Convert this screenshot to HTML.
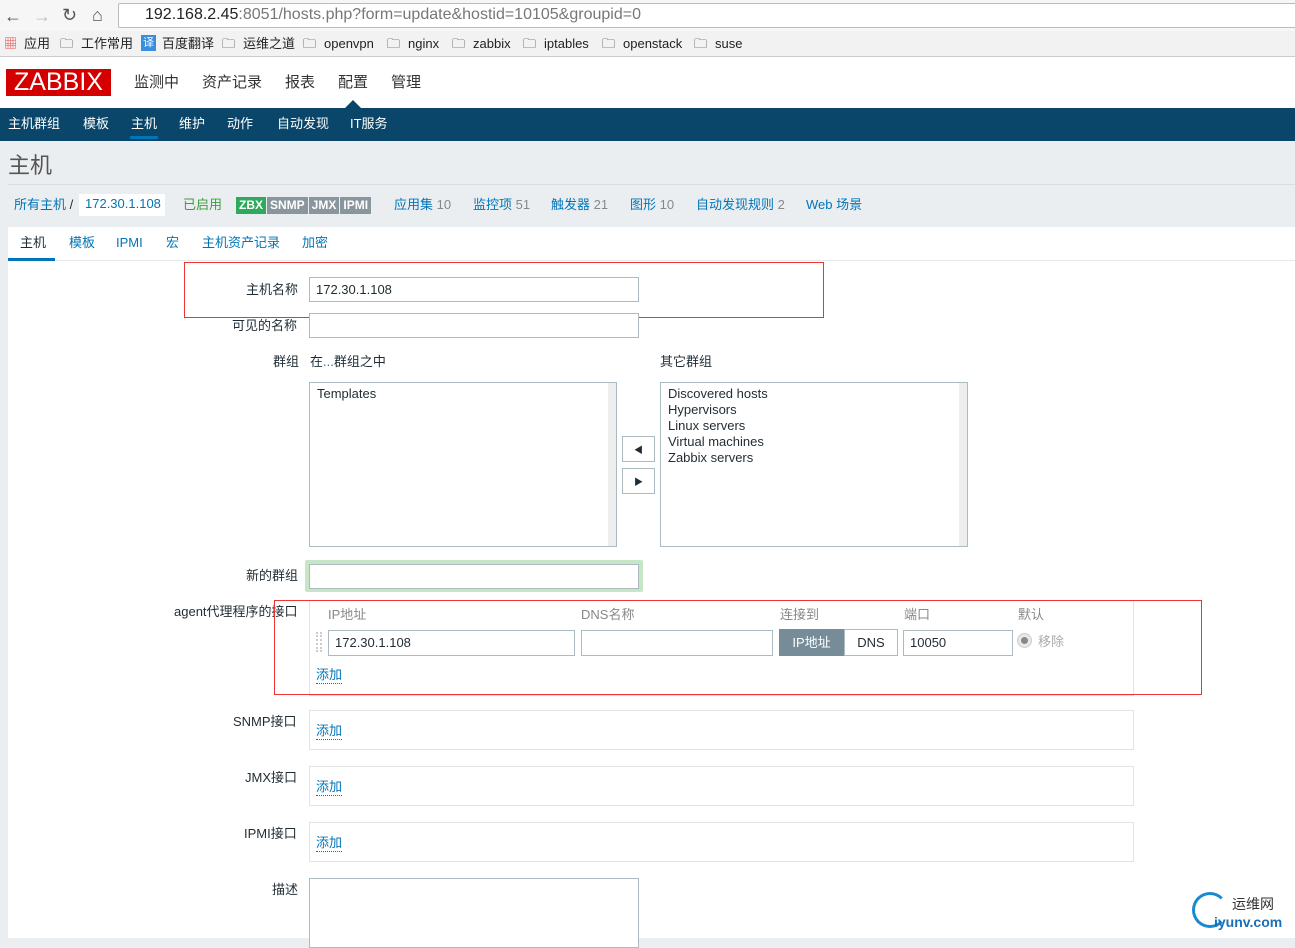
<!DOCTYPE html><html><head><meta charset="utf-8"><style>
*{box-sizing:border-box;margin:0;padding:0}
body{width:1295px;height:938px;overflow:hidden;font-family:"Liberation Sans","Noto Sans CJK SC",sans-serif;font-size:12px;color:#1f2c33;background:#ebeef0;position:relative}
.a{position:absolute;white-space:nowrap;line-height:1.3}
.blue{color:#0275b8}
.in{position:absolute;background:#fff;border:1px solid #acbbc2;height:25px;padding:4px 6px;font-size:12px;line-height:15px}
.box{position:absolute;background:#fff;border:1px solid #dfe4e7}
.add{color:#0275b8;border-bottom:1px dotted #0275b8;font-size:13px;line-height:1.2}
.bm{position:absolute;top:36px;font-size:13px;color:#222;line-height:1.3}
.g{color:#888}
</style></head><body>
<!-- chrome -->
<div class="a" style="left:0;top:0;width:1295px;height:31px;background:#f6f6f6"></div>
<div class="a" style="left:4px;top:5px;font-size:18px;color:#555">←</div>
<div class="a" style="left:33px;top:5px;font-size:18px;color:#bbb">→</div>
<div class="a" style="left:62px;top:4px;font-size:18px;color:#555">↻</div>
<div class="a" style="left:92px;top:4px;font-size:18px;color:#555">⌂</div>
<div class="a" style="left:118px;top:3px;width:1180px;height:25px;background:#fff;border:1px solid #bbb;border-radius:2px"></div>
<div class="a" style="left:145px;top:5px;font-size:16px;color:#222">192.168.2.45<span style="color:#777">:8051/hosts.php?form=update&amp;hostid=10105&amp;groupid=0</span></div>
<div class="a" style="left:0;top:31px;width:1295px;height:26px;background:#f2f2f2;border-bottom:1px solid #ccc"></div>
<div class="bm" style="left:4px;color:#e44">▦</div><div class="bm" style="left:24px">应用</div>
<div class="bm" style="left:60px">🗀</div><div class="bm" style="left:81px">工作常用</div>
<div class="bm" style="left:141px;top:35px;background:#3b8de0;color:#fff;font-size:11px;padding:1px 2px">译</div><div class="bm" style="left:162px">百度翻译</div>
<div class="bm" style="left:222px">🗀</div><div class="bm" style="left:243px">运维之道</div>
<div class="bm" style="left:303px">🗀</div><div class="bm" style="left:324px">openvpn</div>
<div class="bm" style="left:387px">🗀</div><div class="bm" style="left:408px">nginx</div>
<div class="bm" style="left:452px">🗀</div><div class="bm" style="left:473px">zabbix</div>
<div class="bm" style="left:523px">🗀</div><div class="bm" style="left:544px">iptables</div>
<div class="bm" style="left:602px">🗀</div><div class="bm" style="left:623px">openstack</div>
<div class="bm" style="left:694px">🗀</div><div class="bm" style="left:715px">suse</div>
<!-- header -->
<div class="a" style="left:0;top:57px;width:1295px;height:51px;background:#fff"></div>
<div class="a" style="left:6px;top:69px;width:105px;height:27px;background:#d40000;color:#fff;font-size:25px;line-height:27px;text-align:center">ZABBIX</div>
<div class="a" style="left:134px;top:73px;font-size:15px;color:#333">监测中</div>
<div class="a" style="left:202px;top:73px;font-size:15px;color:#333">资产记录</div>
<div class="a" style="left:285px;top:73px;font-size:15px;color:#333">报表</div>
<div class="a" style="left:338px;top:73px;font-size:15px;color:#333">配置</div>
<div class="a" style="left:391px;top:73px;font-size:15px;color:#333">管理</div>
<div class="a" style="left:345px;top:100px;width:0;height:0;border:8px solid transparent;border-bottom-color:#0a466a;border-top:0"></div>
<div class="a" style="left:0;top:108px;width:1295px;height:33px;background:#0a466a"></div>
<div class="a" style="left:8px;top:116px;font-size:13px;color:#fff">主机群组</div>
<div class="a" style="left:83px;top:116px;font-size:13px;color:#fff">模板</div>
<div class="a" style="left:131px;top:116px;font-size:13px;color:#fff">主机</div>
<div class="a" style="left:179px;top:116px;font-size:13px;color:#fff">维护</div>
<div class="a" style="left:227px;top:116px;font-size:13px;color:#fff">动作</div>
<div class="a" style="left:277px;top:116px;font-size:13px;color:#fff">自动发现</div>
<div class="a" style="left:350px;top:116px;font-size:13px;color:#fff">IT服务</div>
<div class="a" style="left:130px;top:136px;width:28px;height:3px;background:#0275b8"></div>
<div class="a" style="left:8px;top:152px;font-size:22px;color:#555">主机</div>
<div class="a" style="left:8px;top:184px;width:1287px;height:1px;background:#d9dee1"></div>
<div class="a" style="left:14px;top:197px;font-size:13px"><span class="blue">所有主机</span> /</div>
<div class="a" style="left:79px;top:194px;width:86px;height:22px;background:#fff;font-size:13px;padding:2px 6px"><span class="blue">172.30.1.108</span></div>
<div class="a" style="left:183px;top:197px;font-size:13px;color:#3b9f3b">已启用</div>
<div class="a" style="left:236px;top:197px;height:17px;font-size:12px;font-weight:bold;color:#fff;line-height:17px"><span style="background:#2eaa5c;padding:0 3px;display:inline-block">ZBX</span><span style="background:#8a969d;padding:0 3px;display:inline-block;margin-left:1px">SNMP</span><span style="background:#8a969d;padding:0 3px;display:inline-block;margin-left:1px">JMX</span><span style="background:#8a969d;padding:0 3px;display:inline-block;margin-left:1px">IPMI</span></div>
<div class="a blue" style="left:394px;top:197px;font-size:13px">应用集 <span class="g">10</span></div>
<div class="a blue" style="left:473px;top:197px;font-size:13px">监控项 <span class="g">51</span></div>
<div class="a blue" style="left:551px;top:197px;font-size:13px">触发器 <span class="g">21</span></div>
<div class="a blue" style="left:630px;top:197px;font-size:13px">图形 <span class="g">10</span></div>
<div class="a blue" style="left:696px;top:197px;font-size:13px">自动发现规则 <span class="g">2</span></div>
<div class="a blue" style="left:806px;top:197px;font-size:13px">Web 场景</div>
<!-- form -->
<div class="a" style="left:8px;top:227px;width:1287px;height:711px;background:#fff"></div>
<div class="a" style="left:20px;top:235px;font-size:13px">主机</div>
<div class="a blue" style="left:69px;top:235px;font-size:13px">模板</div>
<div class="a blue" style="left:116px;top:235px;font-size:13px">IPMI</div>
<div class="a blue" style="left:166px;top:235px;font-size:13px">宏</div>
<div class="a blue" style="left:202px;top:235px;font-size:13px">主机资产记录</div>
<div class="a blue" style="left:302px;top:235px;font-size:13px">加密</div>
<div class="a" style="left:8px;top:258px;width:47px;height:3px;background:#0275b8"></div>
<div class="a" style="left:55px;top:260px;width:1240px;height:1px;background:#e5e8ea"></div>
<div class="a" style="left:184px;top:262px;width:640px;height:56px;border:1px solid #e33"></div>
<div class="a" style="left:246px;top:282px;font-size:13px">主机名称</div>
<div class="in" style="left:309px;top:277px;width:330px;font-size:13px">172.30.1.108</div>
<div class="a" style="left:232px;top:318px;font-size:13px">可见的名称</div>
<div class="in" style="left:309px;top:313px;width:330px"></div>
<div class="a" style="left:273px;top:354px;font-size:13px">群组</div>
<div class="a" style="left:310px;top:354px;font-size:13px">在<span class="blue">...</span>群组之中</div>
<div class="a" style="left:660px;top:354px;font-size:13px">其它群组</div>
<div class="in" style="left:309px;top:382px;width:308px;height:165px;font-size:13px;padding:3px 7px">Templates<div style="position:absolute;right:0;top:0;width:8px;height:100%;background:#eee"></div></div>
<div class="in" style="left:660px;top:382px;width:308px;height:165px;font-size:13px;padding:3px 7px;line-height:16px">Discovered hosts<br>Hypervisors<br>Linux servers<br>Virtual machines<br>Zabbix servers<div style="position:absolute;right:0;top:0;width:8px;height:100%;background:#eee"></div></div>
<div class="in" style="left:622px;top:436px;width:33px;height:26px;text-align:center;font-size:9px;padding-top:6px">◀</div>
<div class="in" style="left:622px;top:468px;width:33px;height:26px;text-align:center;font-size:9px;padding-top:6px">▶</div>
<div class="a" style="left:246px;top:568px;font-size:13px">新的群组</div>
<div class="a" style="left:305px;top:560px;width:338px;height:32px;background:#c7e6c8;border-radius:2px"></div>
<div class="in" style="left:309px;top:564px;width:330px"></div>
<div class="a" style="left:174px;top:604px;font-size:13px">agent代理程序的接口</div>
<div class="box" style="left:309px;top:600px;width:825px;height:96px"></div>
<div class="a" style="left:274px;top:600px;width:928px;height:95px;border:1px solid #e33"></div>
<div class="a" style="left:328px;top:607px;font-size:13px;color:#888">IP地址</div>
<div class="a" style="left:581px;top:607px;font-size:13px;color:#888">DNS名称</div>
<div class="a" style="left:780px;top:607px;font-size:13px;color:#888">连接到</div>
<div class="a" style="left:904px;top:607px;font-size:13px;color:#888">端口</div>
<div class="a" style="left:1018px;top:607px;font-size:13px;color:#888">默认</div>
<div class="a" style="left:316px;top:632px;height:20px;border-left:2px dotted #ccc;border-right:2px dotted #ccc;width:6px"></div>
<div class="in" style="left:328px;top:630px;width:247px;height:26px;font-size:13px">172.30.1.108</div>
<div class="in" style="left:581px;top:630px;width:192px;height:26px"></div>
<div class="a" style="left:779px;top:629px;width:65px;height:27px;background:#768d99;color:#fff;font-size:13px;text-align:center;line-height:27px">IP地址</div>
<div class="a" style="left:844px;top:629px;width:54px;height:27px;border:1px solid #acbbc2;font-size:13px;text-align:center;line-height:25px">DNS</div>
<div class="in" style="left:903px;top:630px;width:110px;height:26px;font-size:13px">10050</div>
<div class="a" style="left:1018px;top:634px;width:13px;height:13px;border-radius:50%;background:#888;border:3px solid #e8e8e8;box-shadow:0 0 0 1px #ccc"></div>
<div class="a" style="left:1038px;top:634px;font-size:13px;color:#aaa">移除</div>
<div class="a add" style="left:316px;top:667px">添加</div>
<div class="a" style="left:233px;top:714px;font-size:13px">SNMP接口</div>
<div class="box" style="left:309px;top:710px;width:825px;height:40px"></div>
<div class="a add" style="left:316px;top:723px">添加</div>
<div class="a" style="left:245px;top:770px;font-size:13px">JMX接口</div>
<div class="box" style="left:309px;top:766px;width:825px;height:40px"></div>
<div class="a add" style="left:316px;top:779px">添加</div>
<div class="a" style="left:244px;top:826px;font-size:13px">IPMI接口</div>
<div class="box" style="left:309px;top:822px;width:825px;height:40px"></div>
<div class="a add" style="left:316px;top:835px">添加</div>
<div class="a" style="left:272px;top:882px;font-size:13px">描述</div>
<div class="in" style="left:309px;top:878px;width:330px;height:70px"></div>
<div class="a" style="left:1192px;top:892px;width:36px;height:36px;border:3px solid #1a8ad0;border-radius:50%;border-right-color:transparent"></div>
<div class="a" style="left:1232px;top:895px;font-size:14px;color:#333">运维网</div>
<div class="a" style="left:1214px;top:913px;font-size:14px;font-weight:bold;color:#1a6fb8">iyunv.com</div>
</body></html>
